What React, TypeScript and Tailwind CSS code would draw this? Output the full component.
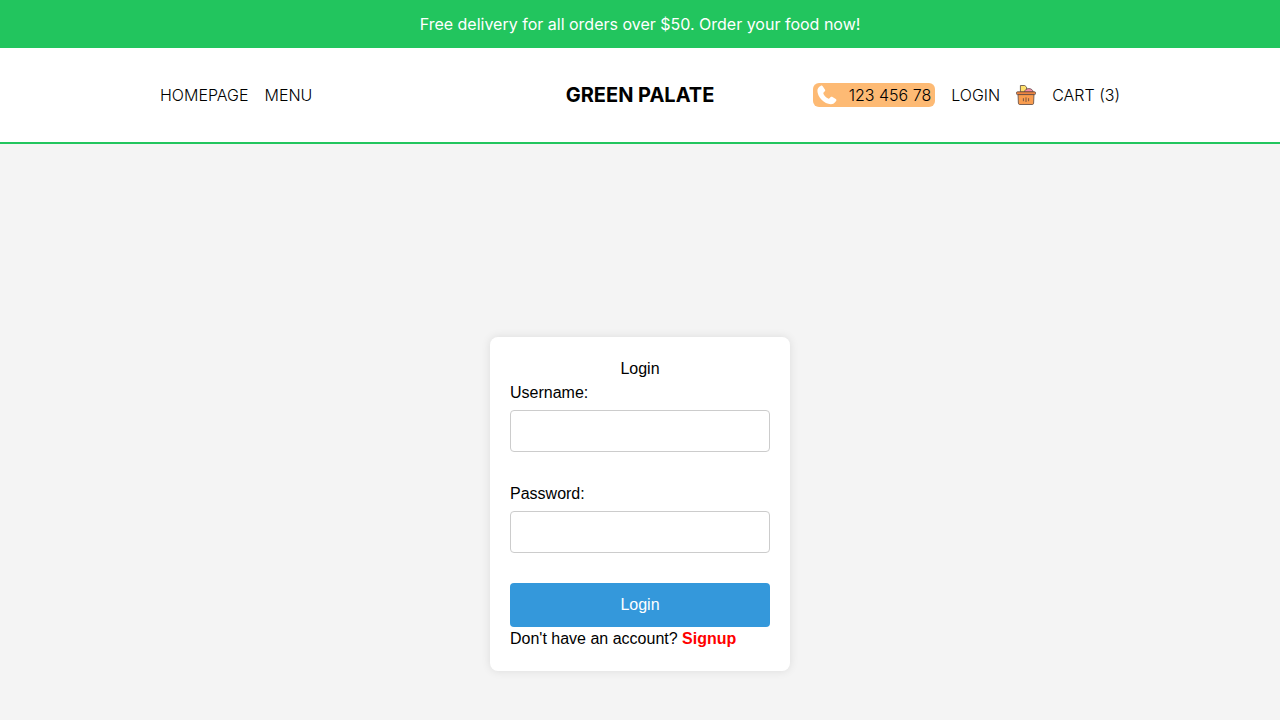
function PhoneIcon() {
  return (
    <svg width="20" height="20" viewBox="0 0 20 20" fill="#fff" aria-hidden="true">
      <path d="M3.6 0.9C4.4 0.4 5.2 0.5 5.7 1.2L7.9 4.4C8.4 5.1 8.3 5.8 7.8 6.3L6.6 7.6C6.3 8 6.2 8.4 6.5 8.9C7.6 10.9 9.2 12.5 11.2 13.5C11.7 13.8 12.1 13.7 12.5 13.3L13.7 12.1C14.2 11.6 14.9 11.5 15.5 11.9L18.8 14C19.5 14.5 19.6 15.2 19.1 15.9C17.8 17.9 16 19.2 13.8 19.2C7.2 19.2 0.4 12 0.4 5.8C0.4 3.5 1.6 1.9 3.6 0.9Z" />
    </svg>
  );
}

function BasketIcon() {
  return (
    <svg width="20" height="20" viewBox="0 0 20 20" stroke="#5a4640" strokeWidth="0.8" strokeLinejoin="round" aria-hidden="true">
      <path d="M4.4 7V0.5H8.8L10.6 2.2V7Z" fill="#ffe06a" />
      <path d="M8.4 7C8.8 4.8 10.5 3.6 12.8 3.6C15.2 3.6 16.8 4.9 17.2 7Z" fill="#f48ba8" />
      <path d="M2 9.4H18L17.6 18.2C17.5 19 17.1 19.5 16.3 19.5H3.7C2.9 19.5 2.5 19 2.4 18.2Z" fill="#f99d4f" />
      <rect x="0.5" y="6.8" width="19" height="2.8" rx="1" fill="#ee8540" />
      <path d="M7.4 13.6V15.8M10 12.8V16.6M12.6 13.6V15.8" fill="none" strokeLinecap="round" />
    </svg>
  );
}

function Field({ id, label, type }: { id: string; label: string; type: string }) {
  return (
    <div className="mb-[30px]">
      <label htmlFor={id} className="mb-[5px] block">
        {label}
      </label>
      <input
        id={id}
        name={id}
        type={type}
        className="block h-[42px] w-full rounded-sm border border-[#ccc] bg-white p-2"
      />
    </div>
  );
}

export default function App() {
  return (
    <div className="bg-[#f4f4f4] font-['Inter',sans-serif] text-base text-black">
      <div className="flex h-12 items-center justify-center bg-[#22c55e] px-4 text-center text-white">
        Free delivery for all orders over $50. Order your food now!
      </div>
      <header className="flex h-24 items-center justify-between border-b-2 border-[#22c55e] bg-white px-40 font-light uppercase">
        <nav className="flex flex-1 gap-4">
          <a href="#home">Homepage</a>
          <a href="#menu">Menu</a>
        </nav>
        <a href="#home" className="text-xl font-bold">
          Green Palate
        </a>
        <div className="flex flex-1 items-center justify-end gap-4">
          <a href="tel:12345678" className="flex items-center gap-3 rounded-md bg-[#fdba74] px-1">
            <PhoneIcon />
            <span>123 456 78</span>
          </a>
          <a href="#login">Login</a>
          <a href="#cart" className="flex items-center gap-4">
            <BasketIcon />
            <span>Cart (3)</span>
          </a>
        </div>
      </header>
      <main className="flex min-h-screen items-center justify-center font-['Liberation_Sans',sans-serif]">
        <form className="w-[300px] rounded-lg bg-white p-5 shadow-[0_0_10px_rgba(0,0,0,0.1)]">
          <h2 className="text-center">Login</h2>
          <Field id="username" label="Username:" type="text" />
          <Field id="password" label="Password:" type="password" />
          <button type="button" className="block w-full rounded-sm bg-[#3498db] p-[10px] text-white">
            Login
          </button>
          <p>
            Don't have an account?{" "}
            <a href="#signup" className="font-bold text-[#ff0000]">
              Signup
            </a>
          </p>
        </form>
      </main>
    </div>
  );
}
